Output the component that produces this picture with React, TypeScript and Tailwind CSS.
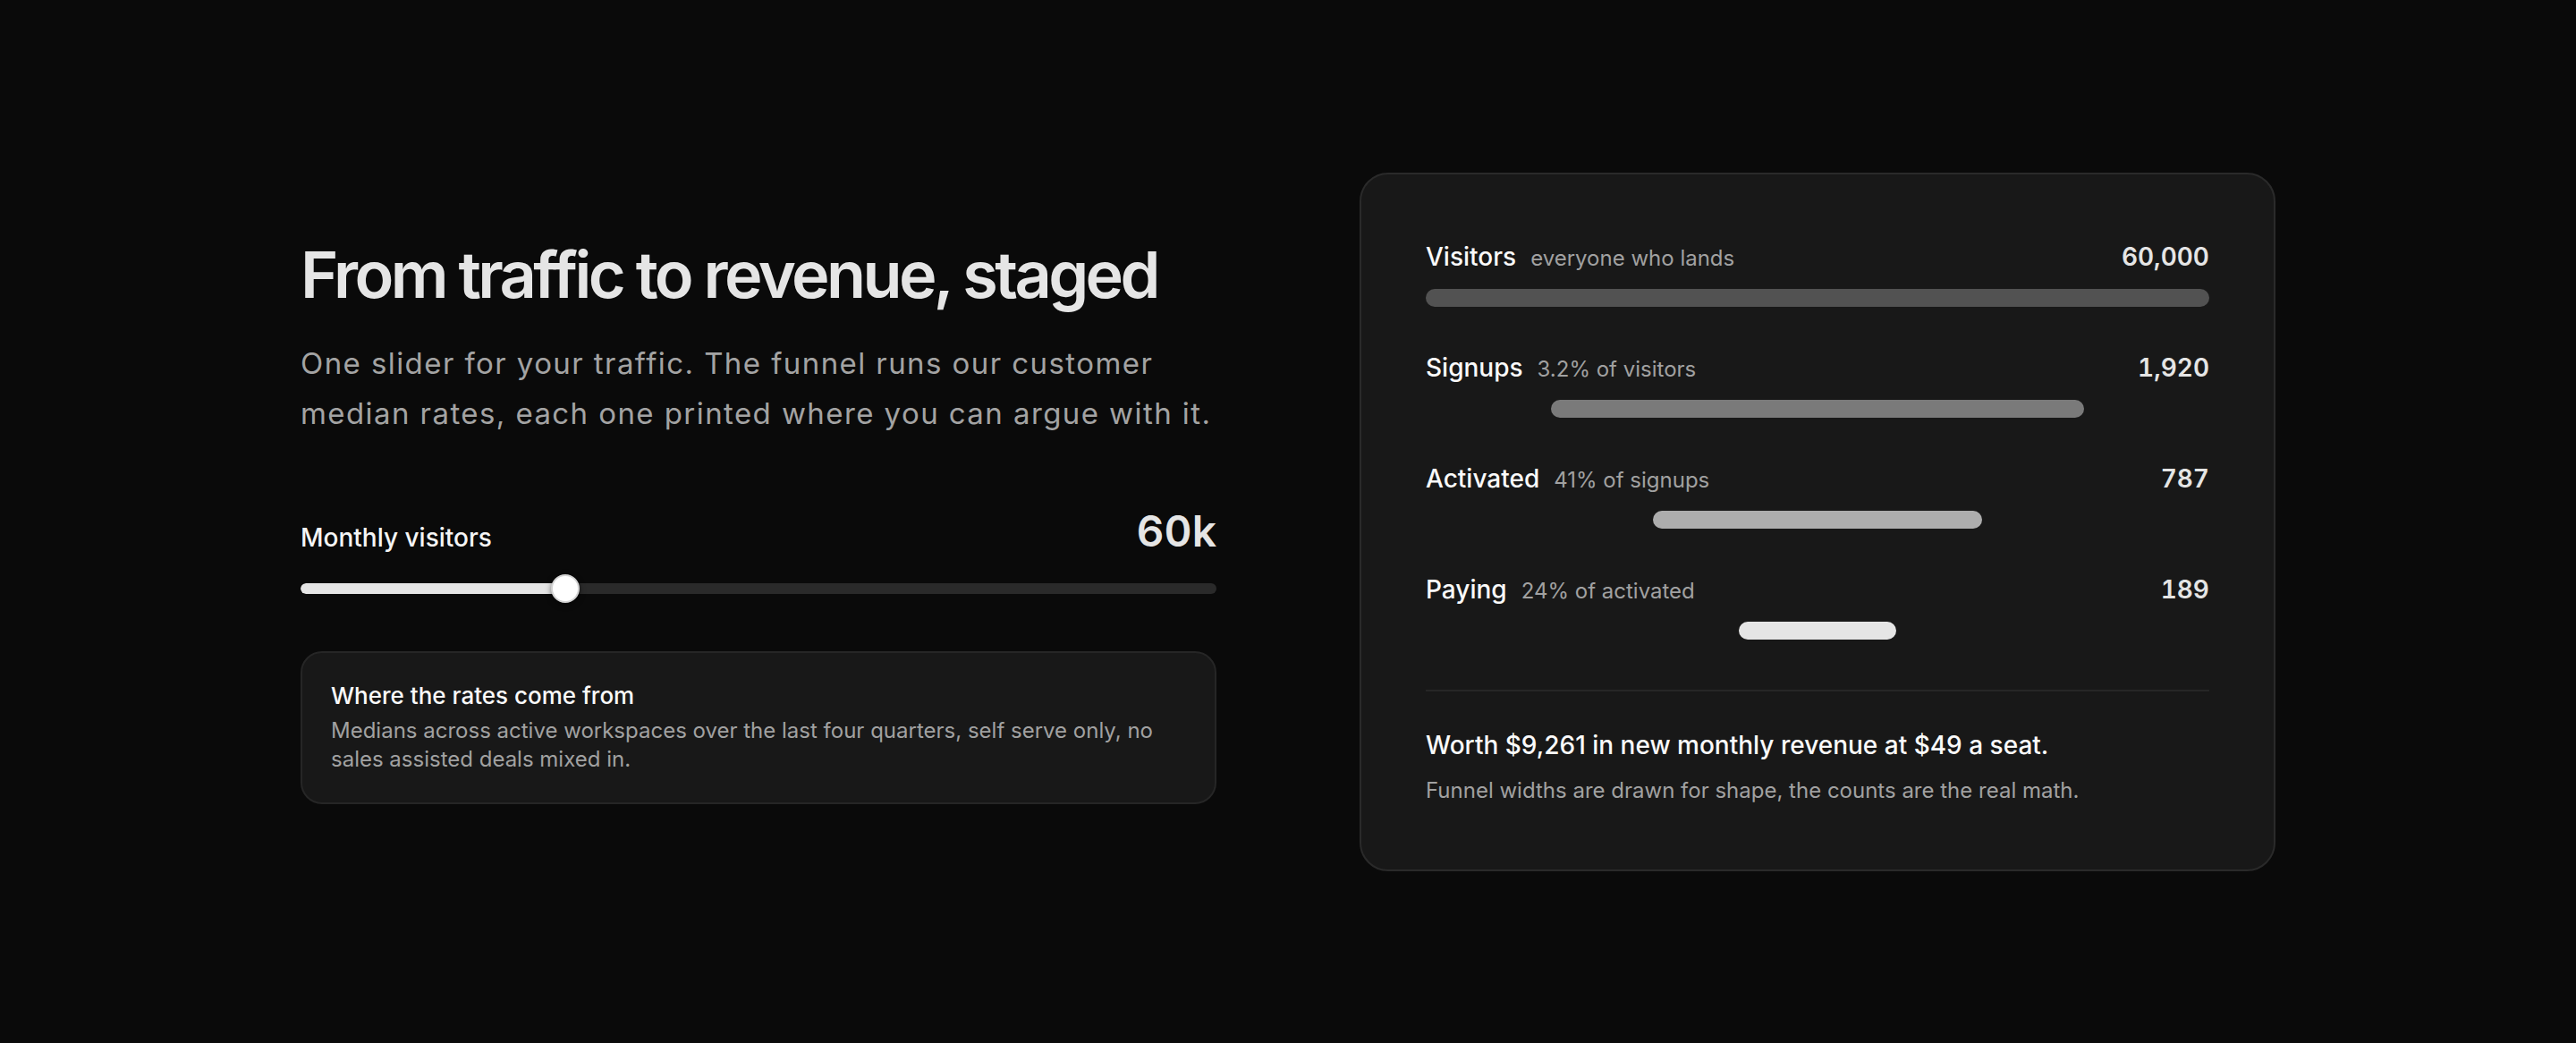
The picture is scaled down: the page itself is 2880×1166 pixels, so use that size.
import { useState } from 'react';

const MIN = 5000;
const MAX = 200000;
const SEAT = 49;

const fmt = (n: number) => n.toLocaleString('en-US');

export default function App() {
  const [visitors, setVisitors] = useState(60000);

  const signups = Math.round(visitors * 0.032);
  const activated = Math.round(signups * 0.41);
  const paying = Math.round(activated * 0.24);
  const revenue = paying * SEAT;
  const frac = (visitors - MIN) / (MAX - MIN);

  const stages = [
    { name: 'Visitors', note: 'everyone who lands', count: visitors, width: 100, bar: 'bg-[#525252]' },
    { name: 'Signups', note: '3.2% of visitors', count: signups, width: 68, bar: 'bg-[#7a7a7a]' },
    { name: 'Activated', note: '41% of signups', count: activated, width: 42, bar: 'bg-[#adadad]' },
    { name: 'Paying', note: '24% of activated', count: paying, width: 20, bar: 'bg-[#e5e5e5]' },
  ];

  return (
    <div className="min-h-screen bg-[#0a0a0a] flex items-center justify-center font-['Inter','Liberation_Sans',sans-serif] antialiased">
      <div className="grid grid-cols-[1024px_1024px] gap-[160px] items-center">
        {/* left column */}
        <div>
          <h1 className="text-[72px] leading-[80px] font-semibold tracking-[-3.6px] text-[#e5e5e5]">From traffic to revenue, staged</h1>
          <p className="mt-[31px] text-[33px] leading-[56px] tracking-[1.42px] text-[#a3a3a3]">
            One slider for your traffic. The funnel runs our customer median rates, each one printed where you can argue with it.
          </p>

          <div className="mt-[72px] flex items-baseline justify-between">
            <span className="text-[28px] leading-[40px] font-medium text-[#f5f5f5]">Monthly visitors</span>
            <span className="text-[48px] leading-[64px] font-semibold text-[#e5e5e5] tabular-nums">{Math.round(visitors / 1000)}k</span>
          </div>

          <div className="relative mt-4 h-8 flex items-center">
            <div className="h-3 w-full rounded-full bg-[#2a2a2a] overflow-hidden">
              <div className="h-full rounded-full bg-[#e5e5e5]" style={{ width: `calc(${frac} * (100% - 32px) + 16px)` }} />
            </div>
            <div
              className="absolute top-0 h-8 w-8 rounded-full bg-white border-2 border-[#d4d4d4] shadow-[0_2px_6px_rgba(0,0,0,0.5)]"
              style={{ left: `calc(${frac} * (100% - 32px))` }}
            />
            <input
              type="range"
              min={MIN}
              max={MAX}
              step={1000}
              value={visitors}
              onChange={(e) => setVisitors(Number(e.target.value))}
              className="absolute inset-0 w-full h-full opacity-0 cursor-pointer"
            />
          </div>

          <div className="mt-[54px] rounded-[24px] border-2 border-[#262626] bg-[#181818] p-8">
            <h3 className="text-[26px] leading-[32px] font-medium text-[#fafafa]">Where the rates come from</h3>
            <p className="mt-[7px] text-[24px] leading-[32px] text-[#a1a1a1]">
              Medians across active workspaces over the last four quarters, self serve only, no sales assisted deals mixed in.
            </p>
          </div>
        </div>

        {/* funnel card */}
        <div className="rounded-[32px] border-2 border-[#2a2a2a] bg-[#181818] p-[72px]">
          <div className="flex flex-col gap-12">
            {stages.map((s) => (
              <div key={s.name}>
                <div className="flex items-baseline justify-between">
                  <div className="flex items-baseline gap-4">
                    <span className="text-[28px] leading-[40px] font-medium text-[#fafafa]">{s.name}</span>
                    <span className="text-[24px] leading-[32px] text-[#a1a1a1]">{s.note}</span>
                  </div>
                  <span className="text-[28px] leading-[40px] font-semibold text-[#e5e5e5] tabular-nums">{fmt(s.count)}</span>
                </div>
                <div className="mt-4 flex justify-center">
                  <div className={`h-5 rounded-full ${s.bar}`} style={{ width: `${s.width}%` }} />
                </div>
              </div>
            ))}
          </div>

          <div className="mt-[56px] border-t-2 border-[#262626] pt-10">
            <p className="text-[28px] leading-[40px] font-medium text-[#fafafa]">
              Worth ${fmt(revenue)} in new monthly revenue at ${SEAT} a seat.
            </p>
            <p className="mt-[15px] text-[24px] leading-[32px] text-[#a1a1a1]">
              Funnel widths are drawn for shape, the counts are the real math.
            </p>
          </div>
        </div>
      </div>
    </div>
  );
}
